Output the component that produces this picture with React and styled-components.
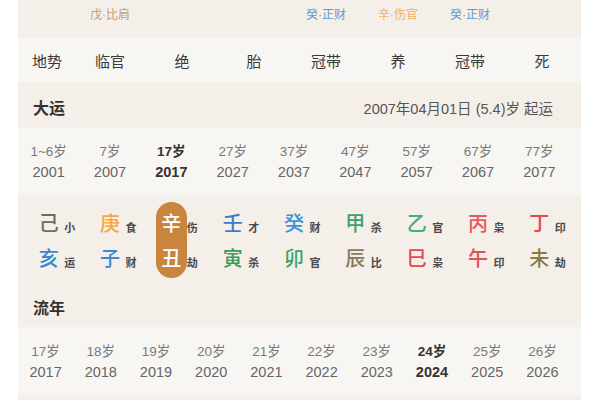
import React from 'react';
import styled, { createGlobalStyle } from 'styled-components';

const Global = createGlobalStyle`
  html, body { margin: 0; padding: 0; background: #ffffff; }
  body { font-family: "Liberation Sans", "Noto Sans CJK SC", sans-serif; }
`;

const BEIGE = '#f5efe9';
const LIGHT = '#f8f6f3';

const Panel = styled.div`
  margin-left: 18px;
  width: 563px;
  background: ${BEIGE};
  padding-bottom: 12px;
`;

const PillarGrid = styled.div`
  display: grid;
  grid-template-columns: 56px repeat(7, 72px);
  background: ${(p) => (p.$light ? LIGHT : BEIGE)};
`;

const HiddenRow = styled(PillarGrid)`
  height: 38px;
  align-items: start;
  padding-top: 7px;
  box-sizing: border-box;
`;

const Hidden = styled.div`
  text-align: center;
  font-size: 12px;
  line-height: 16px;
  color: ${(p) => p.$color || '#b89b7c'};
`;

const TerrainRow = styled(PillarGrid)`
  height: 44px;
  align-items: center;
`;

const TerrainCell = styled.div`
  text-align: center;
  font-size: 15px;
  color: #3a3a3a;
  padding-left: ${(p) => (p.$label ? '2px' : '0')};
`;

const SectionHeader = styled.div`
  height: ${(p) => p.$h}px;
  box-sizing: border-box;
  display: flex;
  align-items: center;
  justify-content: space-between;
  padding: 4px 28px 0 15px;
  background: ${BEIGE};
`;

const Title = styled.div`
  font-size: 16px;
  font-weight: bold;
  color: #333;
`;

const Note = styled.div`
  font-size: 14.5px;
  color: #555;
`;

const YearGrid = styled.div`
  display: grid;
  grid-template-columns: repeat(${(p) => p.$cols}, 1fr);
  width: 552px;
  box-sizing: border-box;
  padding-top: ${(p) => p.$pt}px;
  height: ${(p) => p.$h}px;
  background: ${LIGHT};
`;

const YearWrap = styled.div`
  background: ${LIGHT};
`;

const YearCell = styled.div`
  display: flex;
  flex-direction: column;
  align-items: center;
  font-weight: ${(p) => (p.$active ? 'bold' : 'normal')};
`;

const Age = styled.div`
  font-size: 13.5px;
  line-height: 21px;
  color: ${(p) => (p.$active ? '#333' : '#7a7a7a')};
  white-space: nowrap;
`;

const Year = styled.div`
  font-size: 14.5px;
  line-height: 21px;
  color: ${(p) => (p.$active ? '#333' : '#666')};
`;

const GanzhiGrid = styled.div`
  display: grid;
  grid-template-columns: repeat(9, 1fr);
  width: 552px;
  height: 88px;
  box-sizing: border-box;
  padding-top: 10px;
  background: ${BEIGE};
`;

const GanCell = styled.div`
  display: grid;
  grid-template-columns: 1fr 31px 1fr;
  grid-template-rows: 35px 35px;
`;

const Pill = styled.div`
  grid-column: 2;
  grid-row: 1 / span 2;
  margin: -3px 0;
  border-radius: 16px;
  background: #c9843d;
`;

const Char = styled.div`
  grid-column: 2;
  grid-row: ${(p) => p.$row};
  text-align: center;
  font-family: "Noto Sans CJK SC", sans-serif;
  font-size: 20px;
  line-height: 35px;
  font-weight: 500;
  color: ${(p) => p.$color};
`;

const Tag = styled.div`
  grid-column: 3;
  grid-row: ${(p) => p.$row};
  font-family: "Noto Sans CJK SC", sans-serif;
  font-size: 11px;
  font-weight: bold;
  line-height: 35px;
  padding-top: 5px;
  color: #4a4a4a;
  white-space: nowrap;
`;

const hidden = [
  null,
  { t: '戊·比肩', c: '#bd9f80' },
  null,
  null,
  { t: '癸·正财', c: '#5d9bd5' },
  { t: '辛·伤官', c: '#f1b062' },
  { t: '癸·正财', c: '#5d9bd5' },
  null,
];

const terrain = ['地势', '临官', '绝', '胎', '冠带', '养', '冠带', '死'];

const dayun = [
  ['1~6岁', '2001'],
  ['7岁', '2007'],
  ['17岁', '2017', true],
  ['27岁', '2027'],
  ['37岁', '2037'],
  ['47岁', '2047'],
  ['57岁', '2057'],
  ['67岁', '2067'],
  ['77岁', '2077'],
];

const ganzhi = [
  { a: '己', ac: '#6f6a66', at: '小', b: '亥', bc: '#3b86cf', bt: '运' },
  { a: '庚', ac: '#f4a84a', at: '食', b: '子', bc: '#3b8ad4', bt: '财' },
  { a: '辛', ac: '#ffffff', at: '伤', b: '丑', bc: '#ffffff', bt: '劫', hl: true },
  { a: '壬', ac: '#3d7cc9', at: '才', b: '寅', bc: '#3b9a58', bt: '杀' },
  { a: '癸', ac: '#3a93d8', at: '财', b: '卯', bc: '#3aa36a', bt: '官' },
  { a: '甲', ac: '#3aa36a', at: '杀', b: '辰', bc: '#8b7b5e', bt: '比' },
  { a: '乙', ac: '#45ae85', at: '官', b: '巳', bc: '#e04b4f', bt: '枭' },
  { a: '丙', ac: '#e35d5d', at: '枭', b: '午', bc: '#e3524f', bt: '印' },
  { a: '丁', ac: '#e5484d', at: '印', b: '未', bc: '#8c7a45', bt: '劫' },
];

const liunian = [17, 18, 19, 20, 21, 22, 23, 24, 25, 26].map((a) => [
  `${a}岁`,
  String(2000 + a),
  a === 24,
]);

function YearRows({ items, pt, h }) {
  return (
    <YearWrap>
      <YearGrid $cols={items.length} $pt={pt} $h={h}>
        {items.map(([age, year, active]) => (
          <YearCell key={year} $active={active}>
            <Age $active={active}>{age}</Age>
            <Year $active={active}>{year}</Year>
          </YearCell>
        ))}
      </YearGrid>
    </YearWrap>
  );
}

export default function App() {
  return (
    <>
      <Global />
      <Panel>
        <HiddenRow>
          {hidden.map((h, i) => (
            <Hidden key={i} $color={h && h.c}>
              {h ? h.t : ''}
            </Hidden>
          ))}
        </HiddenRow>
        <TerrainRow $light>
          {terrain.map((t, i) => (
            <TerrainCell key={i} $label={i === 0}>
              {t}
            </TerrainCell>
          ))}
        </TerrainRow>
        <SectionHeader $h={46}>
          <Title>大运</Title>
          <Note>2007年04月01日 (5.4)岁 起运</Note>
        </SectionHeader>
        <YearRows items={dayun} pt={13} h={67} />
        <GanzhiGrid>
          {ganzhi.map((g, i) => (
            <GanCell key={i}>
              {g.hl && <Pill />}
              <Char $row={1} $color={g.ac}>{g.a}</Char>
              <Tag $row={1}>{g.at}</Tag>
              <Char $row={2} $color={g.bc}>{g.b}</Char>
              <Tag $row={2}>{g.bt}</Tag>
            </GanCell>
          ))}
        </GanzhiGrid>
        <SectionHeader $h={44}>
          <Title>流年</Title>
        </SectionHeader>
        <YearRows items={liunian} pt={14} h={68} />
      </Panel>
    </>
  );
}
